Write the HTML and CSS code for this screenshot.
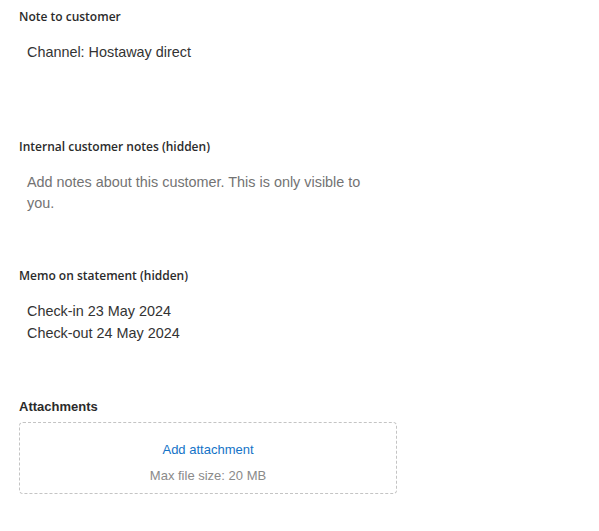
FILE: index.html
```html
<!DOCTYPE html>
<html>
<head>
<meta charset="utf-8">
<link rel="stylesheet" href="styles.css">
</head>
<body>
<div class="page">
  <section class="section">
    <div class="label">Note to customer</div>
    <div class="field">Channel: Hostaway direct</div>
  </section>
  <section class="section">
    <div class="label">Internal customer notes (hidden)</div>
    <div class="field placeholder">Add notes about this customer. This is only visible to you.</div>
  </section>
  <section class="section">
    <div class="label">Memo on statement (hidden)</div>
    <div class="field memo">Check-in 23 May 2024<br>Check-out 24 May 2024</div>
  </section>
  <section class="attach">
    <div class="attach-label">Attachments</div>
    <div class="dropzone">
      <a class="add-link" href="#">Add attachment</a>
      <div class="max-size">Max file size: 20 MB</div>
    </div>
  </section>
</div>
</body>
</html>
```
FILE: styles.css
```css
html, body {
  margin: 0;
  padding: 0;
  background: #ffffff;
}
.page {
  padding: 8px 19px 0 19px;
  font-family: "Liberation Sans", Arial, sans-serif;
  color: #333333;
}
.section {
  width: 378px;
}
.label {
  font-family: "Open Sans", "Liberation Sans", sans-serif;
  font-weight: 600;
  font-size: 12px;
  line-height: 18px;
  color: #2b2b2b;
  margin-bottom: 8px;
}
.field {
  box-sizing: border-box;
  height: 104px;
  padding: 8px 8px;
  font-size: 14.4px;
  line-height: 21px;
  color: #333333;
}
.placeholder {
  height: 103px;
  color: #737373;
}
.memo {
  padding-top: 7px;
  height: 106px;
  line-height: 22px;
}
.attach {
  width: 378px;
}
.attach-label {
  font-weight: 700;
  font-size: 13px;
  line-height: 16px;
  color: #2b2b2b;
  margin-bottom: 7px;
}
.dropzone {
  box-sizing: border-box;
  height: 72px;
  border: 1px dashed #c4c4c4;
  border-radius: 4px;
  display: flex;
  flex-direction: column;
  align-items: center;
  padding-top: 18px;
  gap: 8px;
}
.add-link {
  font-size: 13px;
  line-height: 18px;
  color: #1473c7;
  text-decoration: none;
}
.max-size {
  font-size: 13px;
  line-height: 18px;
  color: #8a8a8a;
}
```
